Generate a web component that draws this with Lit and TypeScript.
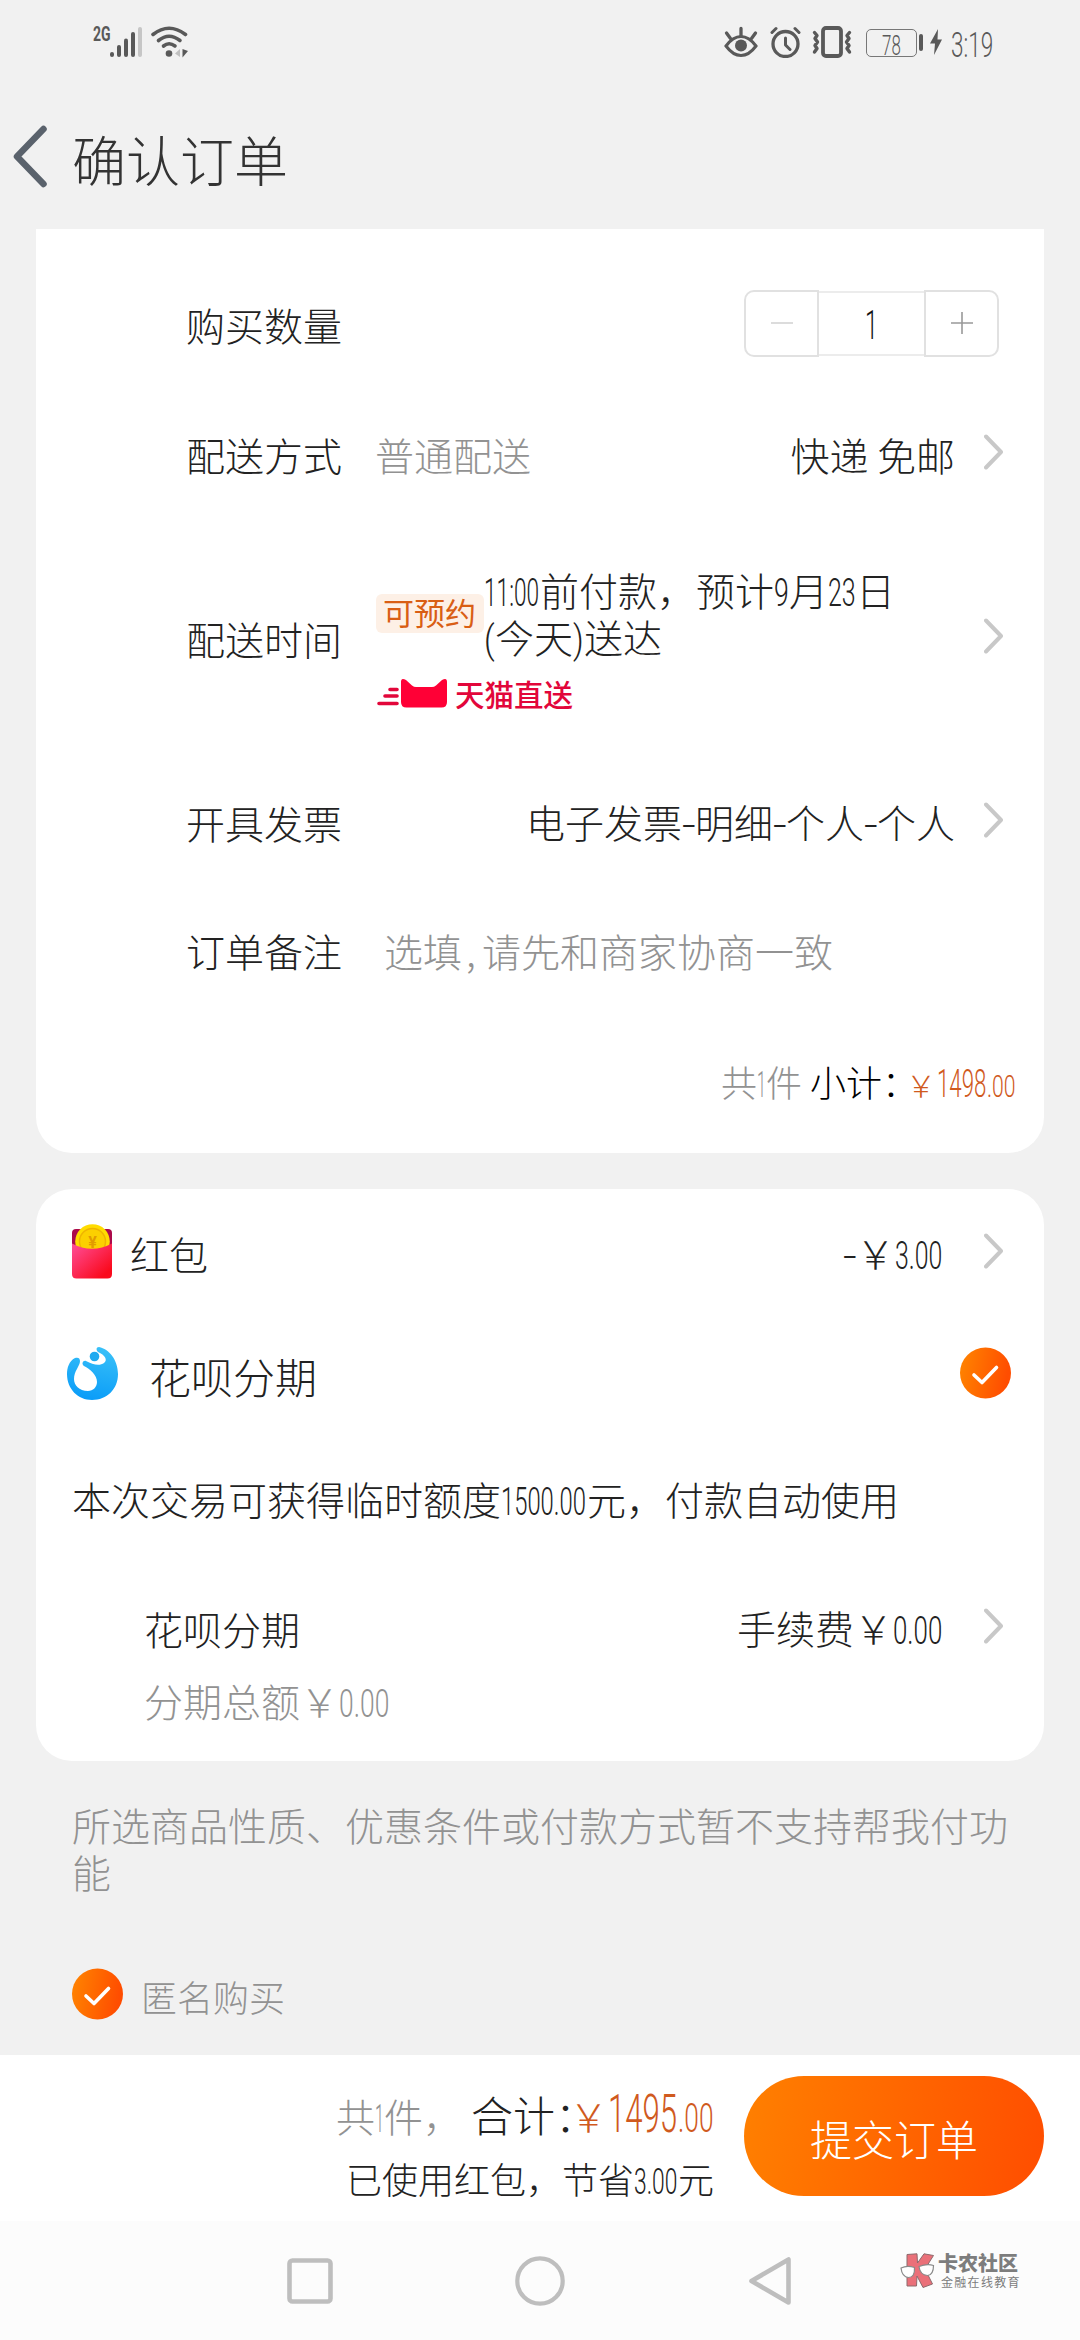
import { LitElement, html, css, svg, nothing } from "lit";

/* Advance widths of Roboto Light in em, used to condense digits to a given width. */
const ADVANCE: Record<string, number> = { ".": 0.245, ":": 0.225, "-": 0.27, "(": 0.33, ")": 0.335 };

const num = (text: string, width: number, size = 39, weight = 300) => {
  const natural = [...text].reduce((sum, ch) => sum + (ADVANCE[ch] ?? 0.5615), 0) * size;
  const inner = `font-size:${size}px;font-weight:${weight};transform:scaleX(${(width / natural).toFixed(4)})`;
  return html`<span class="num" style="width:${width}px"><span class="num-in" style=${inner}>${text}</span></span>`;
};

const chevron = html`<svg class="chevron" width="19" height="36" viewBox="0 0 19 36">
  <path d="M2 2.5 L17 18 L2 33.5" fill="none" stroke="#c8c8c8" stroke-width="4" stroke-linecap="round" stroke-linejoin="round" />
</svg>`;

const check = html`<svg width="51" height="52" viewBox="0 0 51 52">
  <defs>
    <linearGradient id="ck" x1="0" y1="0" x2="1" y2="0.2">
      <stop offset="0" stop-color="#ff8600" />
      <stop offset="1" stop-color="#ff4d00" />
    </linearGradient>
  </defs>
  <circle cx="25.5" cy="26" r="25.5" fill="url(#ck)" />
  <path d="M14 28 L22 35.5 L36.5 20.5" fill="none" stroke="#fff" stroke-width="3.6" stroke-linecap="round" stroke-linejoin="round" />
</svg>`;

class StatusBar extends LitElement {
  static styles = css`
    :host {
      display: flex;
      align-items: center;
      height: 84px;
      padding: 0 86px 0 93px;
      font-family: Roboto, "Noto Sans CJK SC", sans-serif;
      color: #595959;
      box-sizing: border-box;
    }
    .grow {
      flex: 1;
    }
    .net {
      align-self: flex-start;
      margin-top: 25px;
      width: 17px;
      font-size: 20px;
      line-height: 18px;
      font-weight: 700;
    }
    .net-in {
      display: inline-block;
      transform: scaleX(0.7);
      transform-origin: 0 50%;
    }
    .wifi {
      margin-left: 9px;
    }
    .eye {
      margin-right: 12px;
    }
    .alarm {
      margin-right: 11px;
    }
    .vib {
      margin-right: 14px;
    }
    .cell {
      display: flex;
      align-items: center;
      justify-content: center;
      width: 51px;
      height: 28px;
      margin-top: 1px;
      border: 1.5px solid #777;
      border-radius: 5px;
      box-sizing: border-box;
    }
    .nub {
      width: 4px;
      height: 17px;
      margin: 0 7px 0 2px;
      border-radius: 2px;
      background: #595959;
    }
    .bolt {
      margin-right: 9px;
    }
    .num {
      display: inline-block;
      white-space: nowrap;
      line-height: 1;
    }
    .num-in {
      display: inline-block;
      transform-origin: 0 50%;
    }
    .clock {
      margin-top: 3px;
    }
  `;

  render() {
    const bars = [5, 12, 18.5, 25, 30];
    return html`
      <span class="net"><span class="net-in">2G</span></span>
      <svg width="32" height="32" viewBox="0 0 32 32">
        ${bars.map((h, i) => svg`<rect x=${i * 7} y=${31 - h} width="4" height=${h} rx="2" fill=${i === 4 ? "#c6c6c6" : "#595959"} />`)}
      </svg>
      <svg class="wifi" width="38" height="32" viewBox="0 0 38 32">
        <g fill="none" stroke="#595959" stroke-width="3.6" stroke-linecap="round">
          <path d="M2 8.5 Q18 -4 34.500 8.500" />
          <path d="M7.500 14.500 Q18 6 29 14.500" />
          <path d="M12.500 20 Q18 15.500 24 20" />
        </g>
        <circle cx="18" cy="27.500" r="3.300" fill="#595959" />
        <path d="M29 23 V31 L24 27.500 Z" fill="#c0c0c0" />
        <path d="M31.500 23 V31.500 L37 25 Z" fill="#595959" />
      </svg>
      <span class="grow"></span>
      <svg class="eye" width="34" height="32" viewBox="0 0 34 32">
        <g fill="none" stroke="#595959" stroke-width="3.300" stroke-linecap="round">
          <path d="M2 20 Q9 10.500 17 10.500 T32 20 Q25 29.500 17 29.500 T2 20 Z" stroke-width="3" />
          <path d="M17 2.500 V10 M2.500 7 L6.500 12.500 M31.500 7 L27.500 12.500" />
        </g>
        <circle cx="17" cy="19.500" r="6" fill="#595959" />
      </svg>
      <svg class="alarm" width="31" height="32" viewBox="0 0 31 32">
        <g fill="none" stroke="#595959" stroke-width="3" stroke-linecap="round" stroke-linejoin="round">
          <circle cx="15.500" cy="18" r="12.500" stroke-width="3.300" />
          <path d="M15.500 12 V19 L20 23.500 M2 6.500 L6 2.500 M29 6.500 L25 2.500" />
        </g>
      </svg>
      <svg class="vib" width="40" height="32" viewBox="0 0 40 32">
        <rect x="11" y="2" width="18" height="28" rx="3" fill="none" stroke="#595959" stroke-width="3.800" />
        <path d="M2.500 6.500 L5 9.500 L3 12.500 L5.500 16 L3 19.500 L5 22.500 L2.500 26 M37.500 6.500 L35 9.500 L37 12.500 L34.500 16 L37 19.500 L35 22.500 L37.500 26" fill="none" stroke="#595959" stroke-width="3.400" stroke-linecap="round" stroke-linejoin="round" />
      </svg>
      <span class="cell">${num("78", 19, 28)}</span>
      <span class="nub"></span>
      <svg class="bolt" width="12" height="26" viewBox="0 0 12 26"><path d="M8 0 L0 14.500 H5 L4 26 L12 10.500 H7.500 Z" fill="#595959" /></svg>
      <span class="clock">${num("3:19", 43, 35)}</span>
    `;
  }
}
customElements.define("status-bar", StatusBar);

class AppRoot extends LitElement {
  static styles = css`
    :host {
      display: flex;
      flex-direction: column;
      position: relative;
      width: 1080px;
      height: 2340px;
      overflow: hidden;
      background: #f1f1f1;
      color: #222;
      font-family: "Noto Sans CJK SC", Roboto, sans-serif;
      font-weight: 300;
      font-size: 39px;
      line-height: 46px;
      white-space: nowrap;
    }
    svg {
      display: block;
      flex: none;
    }
    .header {
      display: flex;
      align-items: center;
      height: 145px;
      padding-left: 13px;
    }
    .title {
      margin: 5px 0 0 24px;
      font-size: 54px;
      line-height: 64px;
      font-weight: 300;
      color: #333;
    }
    .num {
      display: inline-block;
      line-height: 1;
      white-space: nowrap;
    }
    .num-in {
      display: inline-block;
      font-family: Roboto, sans-serif;
      transform-origin: 0 50%;
    }
    .card {
      margin: 0 36px;
      background: #fff;
      border-radius: 36px;
      box-sizing: border-box;
    }
    .goods {
      height: 924px;
      padding-top: 31px;
      border-radius: 0 0 36px 36px;
    }
    .row {
      display: flex;
      align-items: center;
      height: 128px;
      padding: 0 41px 0 150px;
      box-sizing: border-box;
    }
    .text {
      padding-top: 3px;
    }
    .muted {
      color: #929292;
    }
    .grow {
      flex: 1;
    }
    .chevron {
      margin-left: 29px;
    }
    .value {
      margin-left: 33px;
    }
    .remark {
      margin-left: 42px;
    }
    .half {
      display: inline-block;
      width: 16px;
      padding-left: 4px;
    }
    .stepper {
      display: flex;
      align-items: center;
      margin-right: 4px;
      margin-top: -2px;
    }
    .step {
      display: flex;
      align-items: center;
      justify-content: center;
      width: 75px;
      height: 67px;
      border: 2px solid #e1e1e1;
      box-sizing: border-box;
    }
    .step.minus {
      border-radius: 10px 0 0 10px;
    }
    .step.plus {
      border-radius: 0 10px 10px 0;
    }
    .count {
      display: flex;
      align-items: center;
      justify-content: center;
      width: 105px;
      height: 65px;
      padding-top: 3px;
      border: solid #ececec;
      border-width: 2px 0;
      box-sizing: border-box;
      color: #111;
    }
    .quantity .text {
      padding-top: 0;
    }
    .time {
      height: 240px;
    }
    .schedule {
      display: flex;
      flex-direction: column;
      align-items: flex-start;
      margin: 3px 0 0 34px;
    }
    .when {
      display: flex;
      align-items: center;
    }
    .tag {
      height: 39px;
      width: 108px;
      box-sizing: border-box;
      padding-left: 7px;
      border-radius: 6px;
      background: #fdf0e6;
      color: #d95e14;
      font-size: 31px;
      line-height: 36px;
      font-weight: 400;
    }
    .tmall {
      display: flex;
      align-items: center;
      margin-top: 17px;
      gap: 8px;
      color: #e2063a;
      font-size: 29.5px;
      line-height: 32px;
      font-weight: 500;
    }
    .tmall-cat {
      margin-left: 1px;
    }
    .subtotal {
      display: flex;
      align-items: baseline;
      justify-content: flex-end;
      margin-top: 46px;
      padding-right: 28px;
      font-size: 36px;
    }
    .black {
      color: #000;
    }
    .price {
      color: #d05a1e;
    }
    .narrow {
      letter-spacing: -12px;
    }
    .narrower {
      letter-spacing: -28px;
    }
    .yen30 {
      font-size: 30px;
      letter-spacing: 1px;
    }
    .pay {
      height: 572px;
      margin-top: 36px;
    }
    .packet {
      height: 124px;
      padding-left: 36px;
    }
    .packet-name {
      margin-left: 18px;
    }
    .huabei {
      height: 120px;
      padding: 0 33px 0 30px;
    }
    .huabei-name {
      margin-left: 30px;
      font-size: 42px;
      padding-top: 5px;
    }
    .credit {
      padding-left: 36px;
    }
    .plan {
      height: 130px;
      padding-left: 108px;
    }
    .plan-total {
      margin: -14px 0 0 108px;
    }
    .amount {
      margin-right: 12px;
    }
    .note {
      padding: 40px 72px 0;
      color: #929292;
      line-height: 47px;
      white-space: normal;
    }
    .anon {
      display: flex;
      align-items: center;
      margin: 73px 0 0 72px;
      height: 52px;
      color: #929292;
      font-size: 36px;
    }
    .anon-name {
      margin-left: 18px;
    }
    .grow-page {
      flex: 1;
    }
    .bar {
      display: flex;
      align-items: flex-start;
      justify-content: flex-end;
      gap: 30px;
      height: 166px;
      padding: 21px 36px 0 0;
      box-sizing: border-box;
      background: #fff;
    }
    .sum {
      display: flex;
      flex-direction: column;
      align-items: flex-end;
    }
    .sum-main {
      display: flex;
      align-items: baseline;
      height: 76px;
      line-height: 76px;
    }
    .total {
      font-size: 42px;
      margin-left: 9px;
    }
    .saved {
      font-size: 36px;
      line-height: 48px;
      margin-top: 2px;
    }
    .submit {
      display: flex;
      align-items: center;
      justify-content: center;
      width: 300px;
      height: 120px;
      padding-top: 3px;
      box-sizing: border-box;
      border-radius: 60px;
      background: linear-gradient(100deg, #ff8000, #ff4d00);
      color: #fff;
      font-size: 42px;
    }
    .nav {
      display: flex;
      align-items: center;
      justify-content: center;
      height: 119px;
      background: #fcfcfc;
    }
    .key {
      display: flex;
      justify-content: center;
      width: 230px;
    }
    .mark {
      position: absolute;
      left: 900px;
      top: 2253px;
      display: flex;
      gap: 3px;
      color: #7d7d7d;
    }
    .mark-name {
      font-size: 20px;
      line-height: 20px;
      font-weight: 900;
    }
    .mark-sub {
      margin: 2px 0 0 3px;
      font-size: 12px;
      line-height: 13px;
      letter-spacing: 1.3px;
      font-weight: 400;
    }
  `;

  private row(label: string, body: unknown, arrow = true, extra = "") {
    return html`<div class="row ${extra}"><span class="text">${label}</span>${body}${arrow ? chevron : nothing}</div>`;
  }

  render() {
    return html`
      <status-bar></status-bar>
      <div class="header">
        <svg width="35" height="64" viewBox="0 0 35 64">
          <path d="M30.500 4 L4 31.500 L30.500 59" fill="none" stroke="#5a626c" stroke-width="6.500" stroke-linecap="round" stroke-linejoin="round" />
        </svg>
        <div class="title">确认订单</div>
      </div>

      <div class="card goods">
        ${this.row(
          "购买数量",
          html`<span class="grow"></span>
            <div class="stepper">
              <span class="step minus"><svg width="22" height="22"><path d="M0 11 H22" stroke="#dcdcdc" stroke-width="2" /></svg></span>
              <span class="count">${num("1", 13, 40)}</span>
              <span class="step plus"><svg width="22" height="22"><path d="M0 11 H22 M11 0 V22" stroke="#999" stroke-width="1.600" /></svg></span>
            </div>`,
          false,
          "quantity",
        )}
        ${this.row("配送方式", html`<span class="text value muted">普通配送</span><span class="grow"></span><span class="text">快递 免邮</span>`)}
        ${this.row(
          "配送时间",
          html`<div class="schedule">
              <div class="when">
                <span class="tag">可预约</span>
                <span>${num("11:00", 56)}前付款，预计${num("9", 15)}月${num("23", 28)}日<br />${num("(", 11)}今天${num(")", 11)}送达</span>
              </div>
              <div class="tmall">
                <svg class="tmall-cat" width="70" height="30" viewBox="0 0 70 30">
                  <path d="M13 11.500 H20 M8 18 H20 M2 25.500 H20" stroke="#e2063a" stroke-width="3.600" stroke-linecap="round" />
                  <path d="M24 4 Q24 -1 29 2 L35 7.500 Q37 9 39 9 H55 Q57 9 59 7.500 L65 2 Q70 -1 70 4 V24 Q70 29.500 64.500 29.500 H29.500 Q24 29.500 24 24 Z" fill="#ff0036" />
                </svg>
                <span>天猫直送</span>
              </div>
            </div>
            <span class="grow"></span>`,
          true,
          "time",
        )}
        ${this.row("开具发票", html`<span class="grow"></span><span class="text">电子发票${num("-", 13)}明细${num("-", 13)}个人${num("-", 13)}个人</span>`)}
        ${this.row("订单备注", html`<span class="text remark muted">选填<span class="half">,</span>请先和商家协商一致</span>`, false)}
        <div class="subtotal">
          <span class="muted">共${num("1", 9, 36)}件</span>
          <span class="black">&nbsp;小计<span class="narrow">：</span></span>
          <span class="price"><span class="yen30">￥</span>${num("1498", 50, 39)}${num(".00", 29, 32)}</span>
        </div>
      </div>

      <div class="card pay">
        <div class="row packet">
          <svg width="40" height="55" viewBox="0 0 40 55">
            <defs>
              <linearGradient id="rp" x1="0" y1="0" x2="1" y2="1">
                <stop offset="0" stop-color="#ff4f9a" />
                <stop offset="0.850" stop-color="#fa0a1c" />
              </linearGradient>
            </defs>
            <rect x="0" y="5" width="40" height="30" rx="4" fill="#ab0a4b" />
            <circle cx="20.500" cy="17.500" r="17.300" fill="#ffdc00" />
            <circle cx="20.500" cy="17.500" r="13" fill="#fcd000" stroke="#efb400" stroke-width="1.500" />
            <text x="20.500" y="24" text-anchor="middle" font-family="Roboto" font-size="16" font-weight="700" fill="#e29a00">¥</text>
            <path d="M0 19.500 Q20 30 40 19.500 V50 Q40 54.500 35.500 54.500 H4.500 Q0 54.500 0 50 Z" fill="url(#rp)" />
          </svg>
          <span class="text packet-name">红包</span>
          <span class="grow"></span>
          <span class="text amount">${num("-", 13)}￥${num("3.00", 48)}</span>
          ${chevron}
        </div>
        <div class="row huabei">
          <svg width="53" height="55" viewBox="0 0 53 55">
            <defs>
              <linearGradient id="hb" x1="0.600" y1="0" x2="0.400" y2="1">
                <stop offset="0" stop-color="#38c0f8" />
                <stop offset="1" stop-color="#0a9cf8" />
              </linearGradient>
            </defs>
            <path d="M9 12 C3 15 1 22 1 28 C1 43 12 54 26 54 C41 54 52 43 52 28 C52 14 43 3 33 1 C30 1 30 4 32 6 C39 9 42 14 38 17 C34 20 27 19 20 15 C17 14 15 18 18 20 C24 23 31 29 31 36 C31 41 27 45 22 45 C13 45 8 39 8 33 C8 25 14 20 14 15 C14 12 12 11 9 12 Z" fill="url(#hb)" />
            <circle cx="28.500" cy="10.500" r="4.800" fill="#1eaaf0" />
          </svg>
          <span class="huabei-name">花呗分期</span>
          <span class="grow"></span>
          ${check}
        </div>
        <div class="row credit"><span class="text">本次交易可获得临时额度${num("1500.00", 86)}元，付款自动使用</span></div>
        <div class="row plan">
          <span class="text">花呗分期</span>
          <span class="grow"></span>
          <span class="text amount">手续费￥${num("0.00", 50)}</span>
          ${chevron}
        </div>
        <div class="plan-total muted">分期总额￥${num("0.00", 51)}</div>
      </div>

      <div class="note">所选商品性质、优惠条件或付款方式暂不支持帮我付功能</div>
      <div class="anon">${check}<span class="text anon-name">匿名购买</span></div>
      <div class="grow-page"></div>

      <div class="bar">
        <div class="sum">
          <div class="sum-main">
            <span class="muted">共${num("1", 9)}件，</span>
            <span class="total">合计<span class="narrower">：</span></span>
            <span class="price">￥${num("1495", 70, 54)}${num(".00", 36, 40)}</span>
          </div>
          <div class="saved">已使用红包，节省${num("3.00", 44, 36)}元</div>
        </div>
        <div class="submit">提交订单</div>
      </div>

      <div class="nav">
        <span class="key"><svg width="46" height="46"><rect x="2.500" y="2.500" width="41" height="41" rx="3" fill="none" stroke="#bebebe" stroke-width="4.600" /></svg></span>
        <span class="key"><svg width="50" height="50"><circle cx="25" cy="25" r="22.700" fill="none" stroke="#bebebe" stroke-width="4.200" /></svg></span>
        <span class="key"><svg width="44" height="50"><path d="M40.500 3.500 V46.500 L3.500 25 Z" fill="none" stroke="#bebebe" stroke-width="4.600" stroke-linejoin="round" /></svg></span>
      </div>

      <div class="mark">
        <svg width="35" height="36" viewBox="0 0 35 36">
          <g fill="#ea7079" stroke="#8d6a6d" stroke-width="1">
            <path d="M7 1.500 L17 0.800 L17.500 10 L24 0.800 L33.500 2.500 L25 16 L32.500 31 L23 34.500 L17 23 L16.500 33 H7 Z" />
          </g>
          <g fill="#fff" stroke="#8a8a8a" stroke-width="1.200">
            <path d="M1 15 Q7 12 14.500 14.500 Q15 24.500 8.500 24.500 Q2 24 1 15 Z" />
            <path d="M19 13.500 Q27 10.500 33.500 12.500 Q33.500 22 27.500 22.500 Q20 22 19 13.500 Z" />
          </g>
        </svg>
        <div>
          <div class="mark-name">卡农社区</div>
          <div class="mark-sub">金融在线教育</div>
        </div>
      </div>
    `;
  }
}
customElements.define("app-root", AppRoot);
